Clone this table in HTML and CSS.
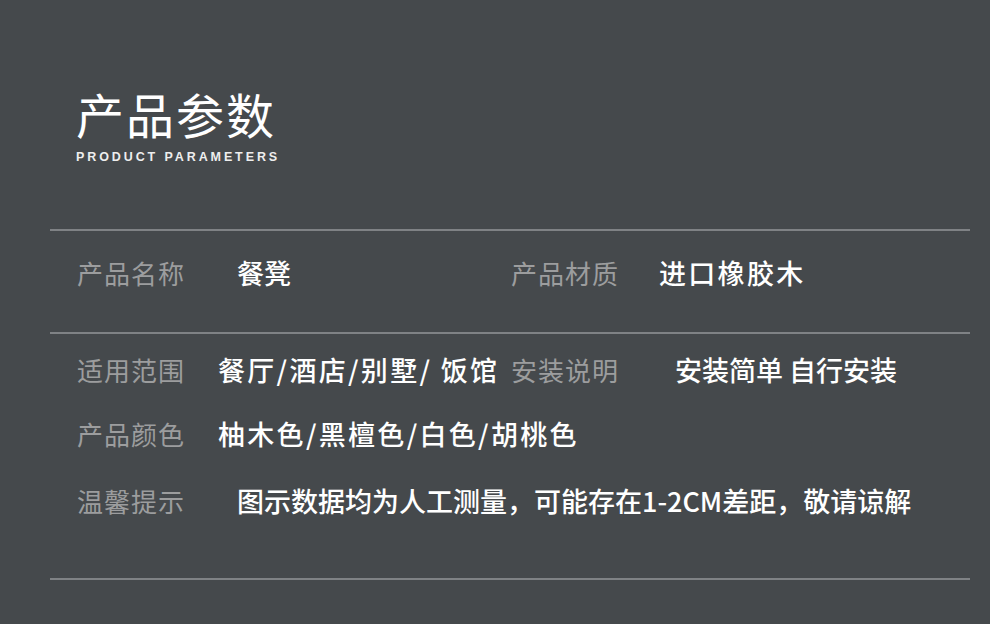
FILE: index.html
```html
<!DOCTYPE html>
<html lang="zh-CN">
<head>
    <meta charset="UTF-8">
    <meta name="viewport" content="width=device-width, initial-scale=1.0">
    <title>产品参数</title>
    <link rel="stylesheet" href="styles.css">
</head>
<body>

    <div class="sheet">
        <div class="heading">
            <h1>产品参数</h1>
            <p class="sub">PRODUCT PARAMETERS</p>
        </div>

        <!-- name / material -->
        <div class="block first">
            <div class="row">
                <span class="label">产品名称</span>
                <span class="value push">餐凳</span>
                <span class="label">产品材质</span>
                <span class="value loose">进口橡胶木</span>
            </div>
        </div>

        <!-- usage, colours, notes -->
        <div class="block second">
            <div class="row">
                <span class="label">适用范围</span>
                <span class="value loose">餐厅/酒店/别墅/ 饭馆</span>
                <span class="label">安装说明</span>
                <span class="value push-sm">安装简单 自行安装</span>
            </div>
            <div class="row">
                <span class="label">产品颜色</span>
                <span class="value wide loose">柚木色/黑檀色/白色/胡桃色</span>
            </div>
            <div class="row">
                <span class="label">温馨提示</span>
                <span class="value wide push">图示数据均为人工测量，可能存在1-2CM差距，敬请谅解</span>
            </div>
        </div>
    </div>

</body>
</html>
```

FILE: styles.css
```css
body {
    margin: 0;
    background-color: #45494c;
    font-family: "Noto Sans CJK SC", "Noto Sans", sans-serif;
    color: #fff;
    overflow: hidden;
}

.sheet {
    width: 920px;
    margin-left: 50px;
    height: 624px;
}

.heading {
    padding: 89px 0 0 26px;
    height: 140px;
    border-bottom: 2px solid #7f8285;
}

h1 {
    margin: 0;
    font-size: 48px;
    line-height: 48px;
    font-weight: 400;
    letter-spacing: 2px;
}

.sub {
    margin: 13px 0 0 0;
    font-family: "Liberation Sans", Arial, sans-serif;
    font-weight: bold;
    font-size: 12.5px;
    line-height: 14px;
    letter-spacing: 2.9px;
    color: #eee;
}

.block {
    border-bottom: 2px solid #7f8285;
    padding-left: 27px;
}

.block.first {
    padding-top: 28px;
    height: 73px;
}

.block.second {
    padding-top: 22px;
    height: 222px;
}

.row {
    display: grid;
    grid-template-columns: 141px 293px 148px auto;
    align-items: center;
    height: 28px;
    margin-bottom: 36px;
}

.row:nth-child(2) {
    margin-bottom: 39px;
}

.label {
    font-size: 26px;
    line-height: 28px;
    letter-spacing: 1px;
    color: #9c9d9e;
    white-space: nowrap;
}

.value {
    font-size: 27px;
    line-height: 28px;
    font-weight: 500;
    color: #fff;
    white-space: nowrap;
}

.loose {
    letter-spacing: 2.3px;
}

.wide {
    grid-column: 2 / 5;
}

.push {
    padding-left: 19px;
}

.push-sm {
    padding-left: 16px;
}
```
